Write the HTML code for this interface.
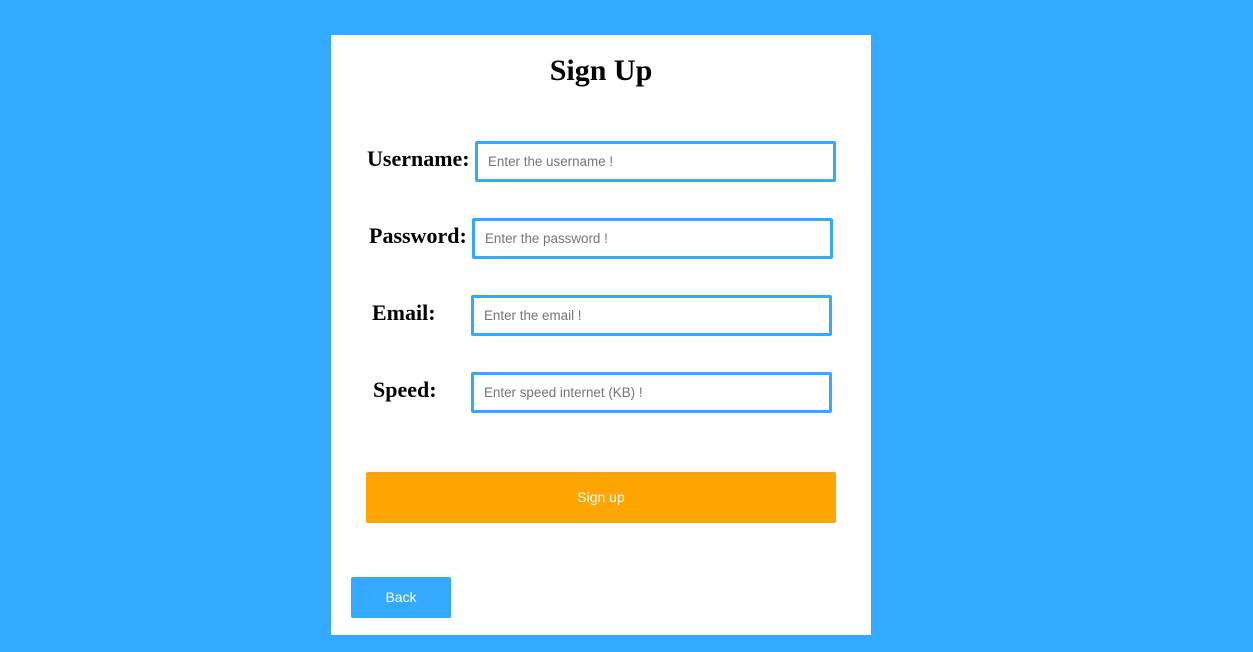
<!DOCTYPE html>
<html><head><meta charset="utf-8"><style>
html,body{margin:0;padding:0;width:1253px;height:652px;background:#33aaff;overflow:hidden}
.card{position:absolute;left:331px;top:35px;width:540px;height:600px;background:#fff}
h1{position:absolute;left:0;top:54px;width:1202px;margin:0;text-align:center;font:bold 30px "Liberation Serif",serif;color:#000}
.lbl{position:absolute;font:bold 22px "Liberation Serif",serif;color:#000;line-height:26px}
.inp{position:absolute;box-sizing:border-box;width:361px;height:41px;border:3px solid #33aaff;border-radius:2px;background:#fff;font:13.4px "Liberation Sans",sans-serif;color:#757575;padding-left:10px;line-height:35px}
.btn{position:absolute;border-radius:2px;color:#fff;font:14px "Liberation Sans",sans-serif;text-align:center}
</style></head><body>
<div class="card"></div>
<h1>Sign Up</h1>
<div class="lbl" style="left:367px;top:146px">Username:</div>
<div class="inp" style="left:475px;top:141px">Enter the username !</div>
<div class="lbl" style="left:369px;top:223px">Password:</div>
<div class="inp" style="left:472px;top:218px">Enter the password !</div>
<div class="lbl" style="left:372px;top:300px">Email:</div>
<div class="inp" style="left:471px;top:295px">Enter the email !</div>
<div class="lbl" style="left:373px;top:377px">Speed:</div>
<div class="inp" style="left:471px;top:372px">Enter speed internet (KB) !</div>
<div class="btn" style="left:366px;top:472px;width:470px;height:51px;line-height:51px;background:#ffa500">Sign up</div>
<div class="btn" style="left:351px;top:577px;width:100px;height:41px;line-height:41px;background:#33aaff">Back</div>
</body></html>
